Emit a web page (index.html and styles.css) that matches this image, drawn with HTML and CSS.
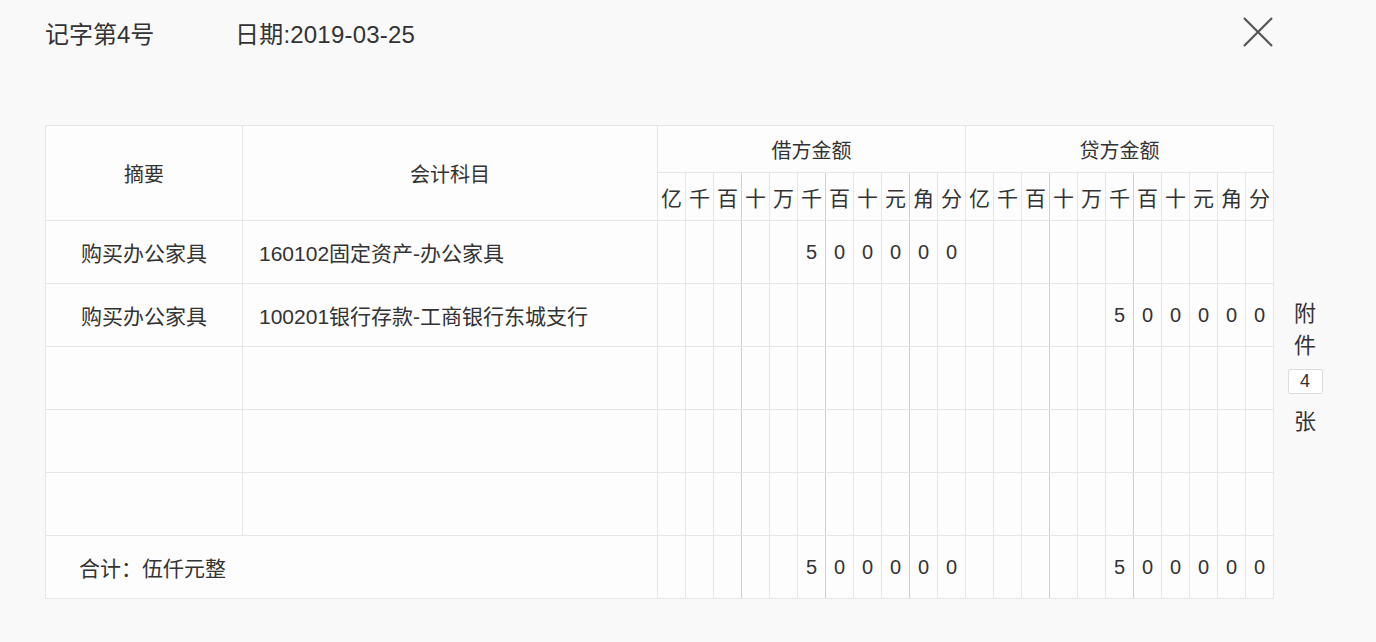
FILE: index.html
```html
<!DOCTYPE html>
<html lang="zh">
<head>
<meta charset="utf-8">
<link rel="stylesheet" href="styles.css">
</head>
<body>
<div class="page">
  <div class="topbar">
    <div class="title">记字第4号</div>
    <div class="date">日期:2019-03-25</div>
    <button class="close" aria-label="close">
      <svg width="32" height="32" viewBox="0 0 32 32"><path d="M2 2 L30 30 M30 2 L2 30" stroke="#555" stroke-width="2.2" fill="none"/></svg>
    </button>
  </div>
  <div class="main">
    <table class="voucher">
      <colgroup>
        <col class="c-sum"><col class="c-acct">
        <col class="c-d"><col class="c-d"><col class="c-d"><col class="c-d"><col class="c-d"><col class="c-d"><col class="c-d"><col class="c-d"><col class="c-d"><col class="c-d"><col class="c-d">
        <col class="c-d"><col class="c-d"><col class="c-d"><col class="c-d"><col class="c-d"><col class="c-d"><col class="c-d"><col class="c-d"><col class="c-d"><col class="c-d"><col class="c-d">
      </colgroup>
      <thead>
        <tr class="h1">
          <th rowspan="2" class="hs">摘要</th>
          <th rowspan="2" class="hs">会计科目</th>
          <th colspan="11" class="hg">借方金额</th>
          <th colspan="11" class="hg">贷方金额</th>
        </tr>
        <tr class="h2">
          <th>亿</th><th>千</th><th>百</th><th class="b">十</th><th>万</th><th>千</th><th class="b">百</th><th>十</th><th>元</th><th class="r">角</th><th>分</th>
          <th>亿</th><th>千</th><th>百</th><th class="b">十</th><th>万</th><th>千</th><th class="b">百</th><th>十</th><th>元</th><th>角</th><th>分</th>
        </tr>
      </thead>
      <tbody>
        <tr>
          <td class="sum">购买办公家具</td><td class="acct">160102固定资产-办公家具</td>
          <td></td><td></td><td></td><td class="b"></td><td></td><td>5</td><td class="b">0</td><td>0</td><td>0</td><td class="r">0</td><td>0</td>
          <td></td><td></td><td></td><td class="b"></td><td></td><td></td><td class="b"></td><td></td><td></td><td></td><td></td>
        </tr>
        <tr>
          <td class="sum">购买办公家具</td><td class="acct">100201银行存款-工商银行东城支行</td>
          <td></td><td></td><td></td><td class="b"></td><td></td><td></td><td class="b"></td><td></td><td></td><td class="r"></td><td></td>
          <td></td><td></td><td></td><td class="b"></td><td></td><td>5</td><td class="b">0</td><td>0</td><td>0</td><td>0</td><td>0</td>
        </tr>
        <tr>
          <td class="sum"></td><td class="acct"></td>
          <td></td><td></td><td></td><td class="b"></td><td></td><td></td><td class="b"></td><td></td><td></td><td class="r"></td><td></td>
          <td></td><td></td><td></td><td class="b"></td><td></td><td></td><td class="b"></td><td></td><td></td><td></td><td></td>
        </tr>
        <tr>
          <td class="sum"></td><td class="acct"></td>
          <td></td><td></td><td></td><td class="b"></td><td></td><td></td><td class="b"></td><td></td><td></td><td class="r"></td><td></td>
          <td></td><td></td><td></td><td class="b"></td><td></td><td></td><td class="b"></td><td></td><td></td><td></td><td></td>
        </tr>
        <tr>
          <td class="sum"></td><td class="acct"></td>
          <td></td><td></td><td></td><td class="b"></td><td></td><td></td><td class="b"></td><td></td><td></td><td class="r"></td><td></td>
          <td></td><td></td><td></td><td class="b"></td><td></td><td></td><td class="b"></td><td></td><td></td><td></td><td></td>
        </tr>
        <tr class="total">
          <td colspan="2" class="tot">合计：伍仟元整</td>
          <td></td><td></td><td></td><td class="b"></td><td></td><td>5</td><td class="b">0</td><td>0</td><td>0</td><td class="r">0</td><td>0</td>
          <td></td><td></td><td></td><td class="b"></td><td></td><td>5</td><td class="b">0</td><td>0</td><td>0</td><td>0</td><td>0</td>
        </tr>
      </tbody>
    </table>
    <div class="attach">
      <span>附</span>
      <span>件</span>
      <span class="count">4</span>
      <span>张</span>
    </div>
  </div>
</div>
</body>
</html>
```
FILE: styles.css
```css
* { box-sizing: border-box; }
html, body { margin: 0; padding: 0; }
body {
  background: #f9f9fa;
  font-family: "Liberation Sans", "Noto Sans CJK SC", sans-serif;
  color: #333;
  width: 1376px;
  height: 642px;
  overflow: hidden;
}
.page { padding: 0 0 0 45px; }
.topbar {
  display: flex;
  align-items: center;
  height: 64px;
  font-size: 24px;
  color: #333;
}
.title { width: 190px; }
.date { flex: 1; letter-spacing: 0.2px; }
.close {
  background: none;
  border: 0;
  padding: 0;
  margin: 0 102px 0 0;
  width: 32px;
  height: 32px;
  display: flex;
}
.main {
  display: flex;
  align-items: flex-start;
  margin-top: 61px;
}
.voucher {
  border-collapse: collapse;
  table-layout: fixed;
  width: 1228px;
  background: #fdfdfd;
}
.c-sum { width: 197px; }
.c-acct { width: 415px; }
.c-d { width: 28px; }
.voucher th, .voucher td {
  border: 1px solid #e6e6e8;
  padding: 0;
  font-weight: normal;
  text-align: center;
  color: #333;
}
.voucher th:has(+ .b), .voucher td:has(+ .b) { border-right-color: #b3dbeb; }
.voucher th:has(+ .r), .voucher td:has(+ .r) { border-right-color: #f5c0b8; }
.h1 th { height: 47px; }
.h2 th { height: 48px; font-size: 21px; }
.hs { font-size: 20px; }
.hg { font-size: 20px; }
.voucher td { height: 63px; font-size: 20px; }
.voucher td.sum { font-size: 21px; }
.voucher td.acct { font-size: 21px; text-align: left; padding-left: 16px; }
.voucher td.tot { font-size: 21px; text-align: left; padding-left: 33px; }
.attach {
  display: flex;
  flex-direction: column;
  align-items: center;
  margin-top: 173px;
  margin-left: 13px;
  width: 36px;
  font-size: 22px;
  line-height: 32px;
  color: #333;
}
.count {
  display: block;
  width: 35px;
  height: 25px;
  border: 1px solid #dcdcdc;
  border-radius: 2px;
  background: #fff;
  font-size: 18px;
  line-height: 23px;
  text-align: center;
  margin: 7px 0 12px;
}
```
